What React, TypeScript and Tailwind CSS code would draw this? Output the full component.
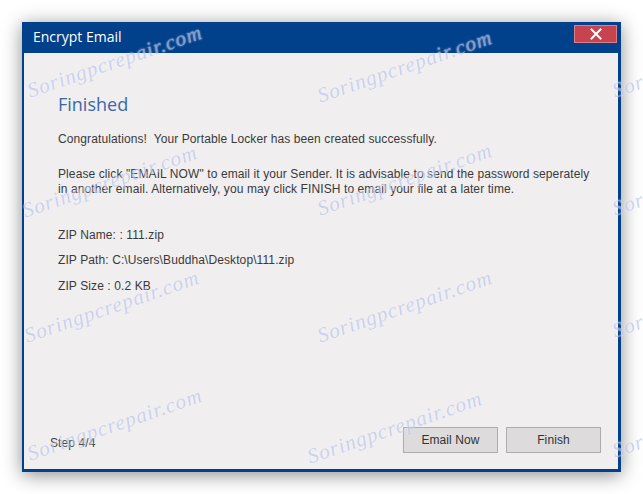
import * as React from 'react';

const marks = [
  { x: 115, y: 62 },
  { x: 405, y: 67 },
  { x: 700, y: 62 },
  { x: 110, y: 182 },
  { x: 405, y: 180 },
  { x: 700, y: 180 },
  { x: 112, y: 307 },
  { x: 405, y: 307 },
  { x: 700, y: 302 },
  { x: 115, y: 425 },
  { x: 395, y: 428 },
  { x: 700, y: 422 },
];

function CloseIcon(): React.ReactElement {
  return (
    <svg width="12" height="12" viewBox="0 0 12 12" fill="none">
      <path d="M1.5 1.5 L10.5 10.5 M10.5 1.5 L1.5 10.5" stroke="#ffffff" strokeWidth="2" strokeLinecap="square" />
    </svg>
  );
}

export default function App(): React.ReactElement {
  return (
    <div className="relative w-[643px] h-[494px] bg-white overflow-hidden font-['Liberation_Sans',Arial,sans-serif] text-[12px] tracking-[0.1px] text-[#3a3a3a]">
      <div className="pt-[22px] pl-[22px]">
        <div className="w-[599px] h-[450px] bg-[#01408a] flex flex-col shadow-[0_3px_18px_rgba(0,0,0,0.45)]">
          {/* title bar */}
          <div className="h-[31px] flex items-start justify-between pl-[11px] pr-[4px]">
            <span className="mt-[6px] text-white text-[14px] tracking-normal font-['Open_Sans',sans-serif] leading-[18px]">Encrypt Email</span>
            <button className="mt-[3px] w-[43px] h-[18px] bg-[#c7434f] border border-[#d98088] flex items-center justify-center">
              <CloseIcon />
            </button>
          </div>

          {/* body */}
          <div className="flex-1 ml-[2px] mr-[3px] mb-[3px] bg-[#f0eeef] flex flex-col">
            <div className="flex-1 pt-[39px] pl-[34px] pr-[10px] leading-[15px]">
              <h1 className="text-[18px] leading-[24px] tracking-normal text-[#3b68a6] font-['Open_Sans',sans-serif]">Finished</h1>
              <p className="mt-[16px]">Congratulations!&nbsp; Your Portable Locker has been created successfully.</p>
              <p className="mt-[20px]">
                Please click "EMAIL NOW" to email it your Sender. It is advisable to send the password seperately
                <br />
                in another email. Alternatively, you may click FINISH to email your file at a later time.
              </p>
              <p className="mt-[31px]">ZIP Name: : 111.zip</p>
              <p className="mt-[10px]">ZIP Path: C:\Users\Buddha\Desktop\111.zip</p>
              <p className="mt-[11px]">ZIP Size : 0.2 KB</p>
            </div>
            <div className="flex items-end justify-between pl-[26px] pr-[17px] pb-[16px]">
              <span className="mb-[2px] leading-[15px]">Step 4/4</span>
              <div className="flex gap-[8px]">
                <button className="w-[95px] h-[26px] bg-[#dddbdb] border border-[#adadad] text-[#333] text-[12px]">Email Now</button>
                <button className="w-[95px] h-[26px] bg-[#dddbdb] border border-[#adadad] text-[#333] text-[12px]">Finish</button>
              </div>
            </div>
          </div>
        </div>
      </div>

      {/* watermark overlay */}
      <div className="absolute inset-0 pointer-events-none">
        {marks.map((m, i) => (
          <span
            key={i}
            className="absolute whitespace-nowrap -translate-x-1/2 -translate-y-1/2 -rotate-[19deg] font-['Liberation_Serif',serif] italic text-[21px] tracking-[1px] text-[#bcc6ec] opacity-70 [text-shadow:0_0_2px_#ffffff]"
            style={{ left: m.x, top: m.y }}
          >
            Soringpcrepair.com
          </span>
        ))}
      </div>
    </div>
  );
}
